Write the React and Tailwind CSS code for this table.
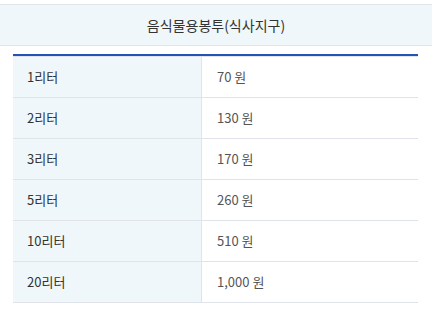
export default function App() {
  const rows = [
    ["1리터", "70 원"],
    ["2리터", "130 원"],
    ["3리터", "170 원"],
    ["5리터", "260 원"],
    ["10리터", "510 원"],
    ["20리터", "1,000 원"],
  ];
  return (
    <div className="w-[441px] h-[311px] bg-white" style={{ fontFamily: '"Noto Sans CJK KR", "Noto Sans", sans-serif' }}>
      <div className="h-[4px]" />
      <div className="w-[432px] h-[42px] border-y border-[#e0e5ea] bg-[#f0f7fa] flex items-center justify-center text-[14px] text-[#333]">
        음식물용봉투(식사지구)
      </div>
      <div className="ml-[13px] w-[405px] mt-[8px] border-t-2 border-[#2553b5]">
        <div className="h-[1px] bg-[#e0e4ea]" />
        {rows.map(([a, b]) => (
          <div key={a} className="flex h-[41px] border-b border-[#e0e4ea]">
            <div className="w-[189px] bg-[#f0f7fa] border-r border-[#e0e4ea] flex items-center pl-[14px] text-[13px] text-[#333]">
              {a}
            </div>
            <div className="flex-1 flex items-center pl-[15px] text-[13px] text-[#555]">{b}</div>
          </div>
        ))}
      </div>
    </div>
  );
}
